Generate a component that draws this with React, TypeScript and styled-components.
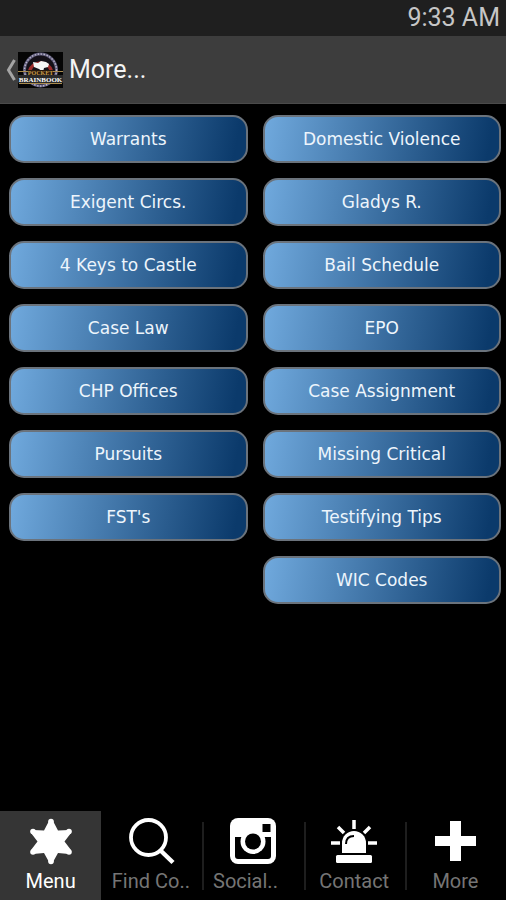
import React from "react";
import styled, { createGlobalStyle } from "styled-components";

const GlobalStyle = createGlobalStyle`
  * { box-sizing: border-box; }
  body { margin: 0; background: #000; font-family: Roboto, "Noto Sans", sans-serif; }
`;

const Screen = styled.div`
  display: flex;
  flex-direction: column;
  min-height: 100vh;
  background: #000;
`;

const StatusBar = styled.div`
  display: flex;
  justify-content: flex-end;
  align-items: center;
  height: 36px;
  padding: 0 6px;
  background: #1f1f1f;
  color: #c6c6c6;
  font-size: 25px;
  line-height: 36px;
`;

const ActionBar = styled.header`
  display: flex;
  align-items: center;
  height: 68px;
  padding: 0 6px;
  background: #3d3d3d;
  border-bottom: 1px solid #4a4a4a;
`;

const BackButton = styled.button`
  display: flex;
  align-items: center;
  gap: 2px;
  padding: 0;
  border: 0;
  background: none;
  cursor: pointer;
`;

const Title = styled.h1`
  margin: 0 0 0 6px;
  color: #f4f4f4;
  font-size: 25px;
  font-weight: 400;
  line-height: 32px;
`;

const Content = styled.main`
  display: flex;
  flex: 1;
  align-items: flex-start;
  gap: 15px;
  padding: 11px 5px 16px 9px;
`;

const Column = styled.div`
  display: flex;
  flex: 1;
  min-width: 0;
  flex-direction: column;
  gap: 15px;
`;

const MenuButton = styled.button`
  height: 48px;
  padding: 0 8px;
  border: 2px solid #6b737c;
  border-radius: 15px;
  background: linear-gradient(100deg, #6fa8dc 2%, #0b3a6b 94%) border-box;
  color: #edf5fc;
  font-family: "DejaVu Sans", sans-serif;
  font-size: 17px;
  line-height: 24px;
  white-space: nowrap;
  cursor: pointer;
`;

const TabBar = styled.nav`
  display: flex;
  height: 89px;
`;

const Tab = styled.button<{ $active?: boolean; $divided?: boolean }>`
  display: flex;
  flex: 1;
  min-width: 0;
  flex-direction: column;
  align-items: center;
  gap: 4px;
  padding: 6px 0 0;
  border: 0;
  background: ${(p) =>
    p.$active
      ? "#353535"
      : p.$divided
        ? "linear-gradient(#1e1e1e, #1e1e1e) 0 11px / 2px 68px no-repeat #000"
        : "#000"};
  color: ${(p) => (p.$active ? "#fff" : "#757575")};
  font-family: Roboto, "Noto Sans", sans-serif;
  font-size: 20px;
  line-height: 24px;
  white-space: nowrap;
  cursor: pointer;
`;

const TabLabel = styled.span<{ $truncated?: boolean }>`
  width: ${(p) => (p.$truncated ? "80px" : "auto")};
  text-align: left;
`;

const TabIcon = styled.svg`
  width: 48px;
  height: 48px;
  color: #fff;
`;

const leftItems = ["Warrants", "Exigent Circs.", "4 Keys to Castle", "Case Law", "CHP Offices", "Pursuits", "FST's"];
const rightItems = ["Domestic Violence", "Gladys R.", "Bail Schedule", "EPO", "Case Assignment", "Missing Critical", "Testifying Tips", "WIC Codes"];

const Chevron = () => (
  <svg width="10" height="24" viewBox="0 0 10 24" aria-hidden="true">
    <path d="M8.5 2 2.5 12l6 10" fill="none" stroke="#a5a5a5" strokeWidth="3" />
  </svg>
);

const Logo = () => (
  <svg width="45" height="36" viewBox="0 0 45 36" role="img" aria-label="Pocket Brainbook">
    <rect width="45" height="36" fill="#050505" />
    <circle cx="22.5" cy="18" r="16" fill="#141018" stroke="#5d5a78" strokeWidth="3" />
    <circle cx="22.5" cy="18" r="16" fill="none" stroke="#bdb8cc" strokeWidth="1.4" strokeDasharray="1.5 1.5" />
    <path d="M11.5 19a11.5 11.5 0 0 1 22 0" fill="none" stroke="#9c2a2a" strokeWidth="3.4" />
    <path d="M15 10l5 1 3-2 5 1 3 2-1 3-4 1-1 4-4-3-5-2z" fill="#f5f5f5" />
    <path d="M0 19.5h45M1 31.5h43" stroke="#a98b4e" strokeWidth="1" />
    <rect x="10" y="18" width="25" height="5" fill="#26190e" />
    <text x="22.5" y="22.5" textAnchor="middle" fill="#c99d4c" fontFamily="Liberation Serif, serif" fontWeight="700" fontSize="6">POCKET</text>
    <rect x="0" y="23" width="45" height="8" fill="#2a2a2a" />
    <text x="22.5" y="30" textAnchor="middle" fill="#fff" fontFamily="Liberation Serif, serif" fontWeight="700" fontSize="7">BRAINBOOK</text>
  </svg>
);

const StarIcon = () => (
  <TabIcon viewBox="0 0 48 48" aria-hidden="true">
    <g fill="currentColor">
      <path d="M22 4h4l5 9.500 11-.5 2 3-6.500 8.500L44 33l-2 4-11-1-5 9h-4l-5-9-11 1-2-4 6.500-8.500L4 16l2-3 11 .5z" />
      <circle cx="24" cy="4.500" r="2.800" />
      <circle cx="24" cy="44.500" r="2.800" />
      <circle cx="6" cy="14.500" r="2.800" />
      <circle cx="42" cy="14.500" r="2.800" />
      <circle cx="6" cy="35" r="2.800" />
      <circle cx="42" cy="35" r="2.800" />
    </g>
  </TabIcon>
);

const SearchIcon = () => (
  <TabIcon viewBox="0 0 48 48" fill="none" stroke="currentColor" aria-hidden="true">
    <circle cx="20.5" cy="20.5" r="17.5" strokeWidth="3.8" />
    <path d="M32 33l13 12.5" strokeWidth="4.5" />
  </TabIcon>
);

const CameraIcon = () => (
  <TabIcon viewBox="0 0 48 48" aria-hidden="true">
    <rect x="1" y="1" width="46" height="46" rx="8" fill="currentColor" />
    <rect x="33.5" y="7" width="8" height="8" fill="#000" />
    <path d="M6 20h36v19a3 3 0 0 1-3 3H9a3 3 0 0 1-3-3z" fill="#000" />
    <circle cx="24" cy="24.5" r="12.5" fill="currentColor" />
    <circle cx="24" cy="24.5" r="8" fill="#000" />
  </TabIcon>
);

const SirenIcon = () => (
  <TabIcon viewBox="0 0 48 48" aria-hidden="true">
    <path d="M24 3v9M8 10l6 6M40 10l-6 6M1 26h9M38 26h9" stroke="currentColor" strokeWidth="3.5" />
    <path d="M12 36V26a12 12 0 0 1 24 0v10z" fill="currentColor" />
    <path d="M16 27c0-5 3-8 8-8" fill="none" stroke="#000" strokeWidth="2" />
    <rect x="6" y="38" width="36" height="8" rx="1.5" fill="currentColor" />
  </TabIcon>
);

const PlusIcon = () => (
  <TabIcon viewBox="0 0 48 48" aria-hidden="true">
    <path d="M19 4h11v15h15v10H30v15H19V29H4V19h15z" fill="currentColor" />
  </TabIcon>
);

export default function App() {
  return (
    <Screen>
      <GlobalStyle />
      <StatusBar>9:33 AM</StatusBar>
      <ActionBar>
        <BackButton aria-label="Back">
          <Chevron />
          <Logo />
        </BackButton>
        <Title>More...</Title>
      </ActionBar>
      <Content>
        {[leftItems, rightItems].map((items) => (
          <Column key={items[0]}>
            {items.map((label) => (
              <MenuButton key={label}>{label}</MenuButton>
            ))}
          </Column>
        ))}
      </Content>
      <TabBar>
        <Tab $active aria-current="page">
          <StarIcon />
          <TabLabel>Menu</TabLabel>
        </Tab>
        <Tab>
          <SearchIcon />
          <TabLabel $truncated>Find Co..</TabLabel>
        </Tab>
        <Tab $divided>
          <CameraIcon />
          <TabLabel $truncated>Social..</TabLabel>
        </Tab>
        <Tab $divided>
          <SirenIcon />
          <TabLabel>Contact</TabLabel>
        </Tab>
        <Tab $divided>
          <PlusIcon />
          <TabLabel>More</TabLabel>
        </Tab>
      </TabBar>
    </Screen>
  );
}
